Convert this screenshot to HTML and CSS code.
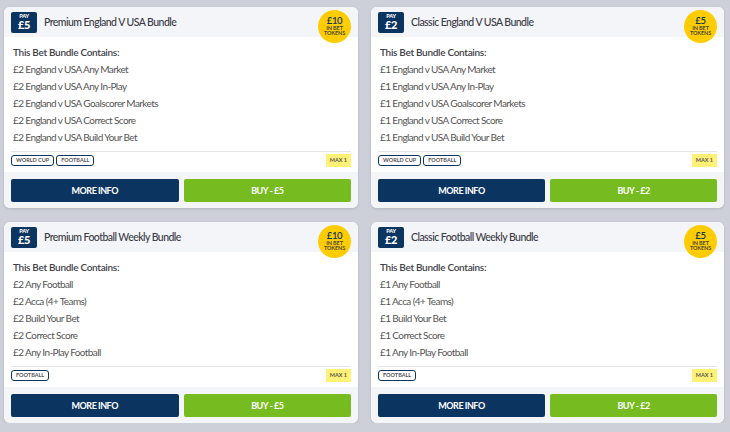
FILE: index.html
```html
<!DOCTYPE html>
<html lang="en">
<head>
  <meta charset="UTF-8" />
  <meta name="viewport" content="width=device-width, initial-scale=1.0"/>
  <title>Bet Bundles</title>
  <link rel="stylesheet" href="styles.css">
</head>
<body>

  <main class="bundles">

    <!-- Premium England v USA -->
    <div class="card">
      <div class="card-head">
        <div class="pay"><span class="pay-label">PAY</span><span class="pay-amount">£5</span></div>
        <h3 class="card-title">Premium England V USA Bundle</h3>
        <div class="token"><span class="token-amount">£10</span><span class="token-text">IN BET<br>TOKENS</span></div>
      </div>
      <div class="card-body">
        <p class="contains">This Bet Bundle Contains:</p>
        <ul class="items">
          <li>£2 England v USA Any Market</li>
          <li>£2 England v USA Any In-Play</li>
          <li>£2 England v USA Goalscorer Markets</li>
          <li>£2 England v USA Correct Score</li>
          <li>£2 England v USA Build Your Bet</li>
        </ul>
        <div class="tags">
          <span class="tag">WORLD CUP</span>
          <span class="tag">FOOTBALL</span>
          <span class="max">MAX 1</span>
        </div>
      </div>
      <div class="card-foot">
        <button class="btn btn-info">MORE INFO</button>
        <button class="btn btn-buy">BUY - £5</button>
      </div>
    </div>

    <!-- Classic England v USA -->
    <div class="card">
      <div class="card-head">
        <div class="pay"><span class="pay-label">PAY</span><span class="pay-amount">£2</span></div>
        <h3 class="card-title">Classic England V USA Bundle</h3>
        <div class="token"><span class="token-amount">£5</span><span class="token-text">IN BET<br>TOKENS</span></div>
      </div>
      <div class="card-body">
        <p class="contains">This Bet Bundle Contains:</p>
        <ul class="items">
          <li>£1 England v USA Any Market</li>
          <li>£1 England v USA Any In-Play</li>
          <li>£1 England v USA Goalscorer Markets</li>
          <li>£1 England v USA Correct Score</li>
          <li>£1 England v USA Build Your Bet</li>
        </ul>
        <div class="tags">
          <span class="tag">WORLD CUP</span>
          <span class="tag">FOOTBALL</span>
          <span class="max">MAX 1</span>
        </div>
      </div>
      <div class="card-foot">
        <button class="btn btn-info">MORE INFO</button>
        <button class="btn btn-buy">BUY - £2</button>
      </div>
    </div>

    <!-- Premium Football Weekly -->
    <div class="card">
      <div class="card-head">
        <div class="pay"><span class="pay-label">PAY</span><span class="pay-amount">£5</span></div>
        <h3 class="card-title">Premium Football Weekly Bundle</h3>
        <div class="token"><span class="token-amount">£10</span><span class="token-text">IN BET<br>TOKENS</span></div>
      </div>
      <div class="card-body">
        <p class="contains">This Bet Bundle Contains:</p>
        <ul class="items">
          <li>£2 Any Football</li>
          <li>£2 Acca (4+ Teams)</li>
          <li>£2 Build Your Bet</li>
          <li>£2 Correct Score</li>
          <li>£2 Any In-Play Football</li>
        </ul>
        <div class="tags">
          <span class="tag">FOOTBALL</span>
          <span class="max">MAX 1</span>
        </div>
      </div>
      <div class="card-foot">
        <button class="btn btn-info">MORE INFO</button>
        <button class="btn btn-buy">BUY - £5</button>
      </div>
    </div>

    <!-- Classic Football Weekly -->
    <div class="card">
      <div class="card-head">
        <div class="pay"><span class="pay-label">PAY</span><span class="pay-amount">£2</span></div>
        <h3 class="card-title">Classic Football Weekly Bundle</h3>
        <div class="token"><span class="token-amount">£5</span><span class="token-text">IN BET<br>TOKENS</span></div>
      </div>
      <div class="card-body">
        <p class="contains">This Bet Bundle Contains:</p>
        <ul class="items">
          <li>£1 Any Football</li>
          <li>£1 Acca (4+ Teams)</li>
          <li>£1 Build Your Bet</li>
          <li>£1 Correct Score</li>
          <li>£1 Any In-Play Football</li>
        </ul>
        <div class="tags">
          <span class="tag">FOOTBALL</span>
          <span class="max">MAX 1</span>
        </div>
      </div>
      <div class="card-foot">
        <button class="btn btn-info">MORE INFO</button>
        <button class="btn btn-buy">BUY - £2</button>
      </div>
    </div>

  </main>

</body>
</html>
```

FILE: styles.css
```css
body {
  margin: 0;
  font-family: Lato, "Open Sans", sans-serif;
  background: #cdcfd9;
  color: #333;
}
.bundles {
  display: grid;
  grid-template-columns: 354px 353px;
  column-gap: 13px;
  row-gap: 14px;
  padding: 7px 0 0 4px;
}
.card {
  position: relative;
  height: 201px;
  background: white;
  border-radius: 6px;
  box-shadow: 0 1px 3px rgba(0, 0, 0, 0.12);
  display: flex;
  flex-direction: column;
}
.card-head {
  display: flex;
  align-items: center;
  height: 30px;
  padding: 0 7px;
  background: #f4f5f8;
  border-radius: 6px 6px 0 0;
}
.pay {
  width: 26px;
  height: 21px;
  background: #0b3560;
  border-radius: 2px;
  color: white;
  display: flex;
  flex-direction: column;
  align-items: center;
  justify-content: center;
  font-weight: 900;
  line-height: 1;
}
.pay-label {
  font-size: 5.5px;
  letter-spacing: -0.2px;
}
.pay-amount {
  font-size: 11px;
  letter-spacing: -0.3px;
}
.card-title {
  margin: 0 0 0 7px;
  font-size: 10.5px;
  font-weight: 500;
  letter-spacing: -0.55px;
  color: #3a3a46;
}
.token {
  position: absolute;
  top: 3px;
  right: 7px;
  width: 33px;
  height: 33px;
  border-radius: 50%;
  background: #ffcc00;
  display: flex;
  flex-direction: column;
  align-items: center;
  justify-content: center;
  line-height: 1;
  text-align: center;
}
.token-amount {
  font-size: 9.5px;
  font-weight: 600;
  letter-spacing: -0.3px;
  color: #0b3560;
}
.token-text {
  font-size: 5.5px;
  font-weight: 700;
  letter-spacing: -0.1px;
  color: #4a4a3a;
}
.card-body {
  flex: 1;
  padding: 0 7px;
}
.contains {
  margin: 7px 0 0 2px;
  font-size: 10px;
  font-weight: 600;
  letter-spacing: -0.3px;
  color: #3f3f4a;
  line-height: 17px;
}
.items {
  list-style-type: none;
  margin: 0;
  padding: 0 0 0 2px;
}
.items li {
  font-size: 10px;
  line-height: 17px;
  letter-spacing: -0.6px;
  color: #555;
}
.tags {
  display: flex;
  align-items: center;
  gap: 2px;
  margin-top: 5px;
  padding-top: 2px;
  border-top: 1px solid #e4e5ea;
}
.tag {
  height: 9px;
  padding: 0 4px;
  border: 1px solid #0b3560;
  border-radius: 3px;
  font-size: 5.5px;
  font-weight: 700;
  line-height: 9px;
  color: #555;
}
.max {
  margin-left: auto;
  height: 13px;
  padding: 0 4px;
  background: #fff176;
  font-size: 5.5px;
  font-weight: 700;
  line-height: 13px;
  color: #555;
}
.card-foot {
  display: flex;
  gap: 5px;
  padding: 7px 7px 6px;
  background: #f4f5f8;
  border-radius: 0 0 6px 6px;
}
.btn {
  flex: 1;
  height: 23px;
  border: none;
  border-radius: 2px;
  font-family: inherit;
  font-size: 9px;
  font-weight: 700;
  letter-spacing: -0.5px;
  color: white;
}
.btn-info {
  background: #0b3560;
}
.btn-buy {
  background: #76bc21;
}
```
